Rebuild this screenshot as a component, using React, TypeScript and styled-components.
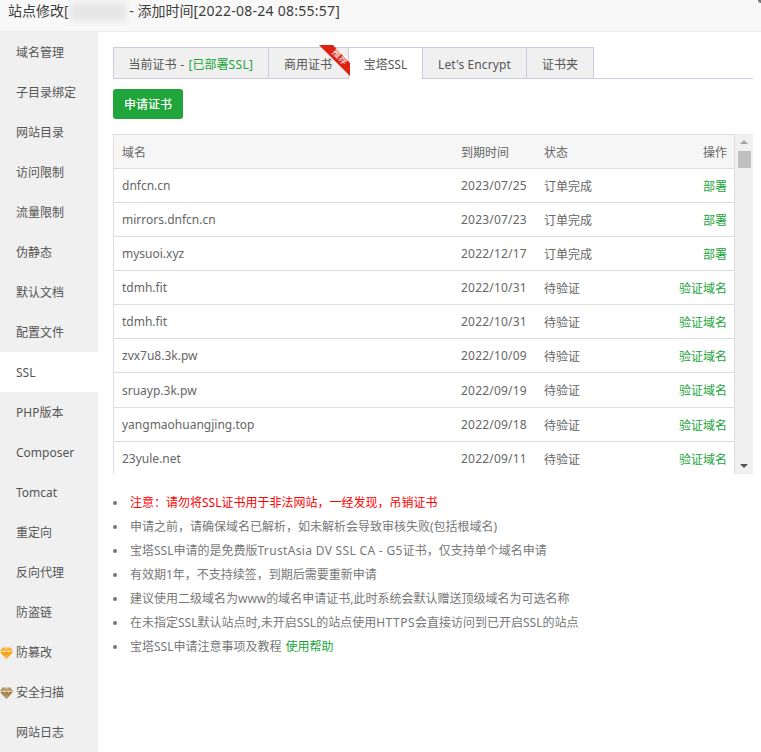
import React from "react";
import styled, { createGlobalStyle } from "styled-components";

const Global = createGlobalStyle`
  html, body { margin: 0; padding: 0; background: #fff; }
  body { font-family: "Noto Sans", "Noto Sans CJK SC", sans-serif; font-size: 12px; color: #666; }
  * { box-sizing: border-box; }
`;

const Page = styled.div`
  width: 761px;
  height: 752px;
  overflow: hidden;
  display: flex;
  flex-direction: column;
  position: relative;
`;
const Header = styled.div`
  height: 32px;
  flex: none;
  background: #f8f8f8;
  border-bottom: 1px solid #eee;
  padding-left: 8px;
  font-size: 14px;
  line-height: 22px;
  color: #3c3c3c;
  display: flex;
  white-space: pre;
`;
const Blur = styled.span`
  display: inline-block;
  width: 56px;
  height: 18px;
  margin: 3px 0 0 1px;
  background: #e6e6e6;
  filter: blur(3px);
`;
const Spaced = styled.span<{ $s: number }>`
  letter-spacing: ${(p) => p.$s}px;
`;
const CloseCorner = styled.span`
  position: absolute;
  top: -3px;
  right: -3px;
  width: 6px;
  height: 6px;
  border-radius: 50%;
  background: #777;
`;
const Body = styled.div`
  flex: 1;
  display: flex;
  min-height: 0;
`;
const Side = styled.div`
  width: 98px;
  flex: none;
  background: #f0f0f0;
`;
const SideItem = styled.div<{ $active?: boolean }>`
  height: 40px;
  line-height: 42px;
  padding-left: 16px;
  position: relative;
  color: #555;
  font-size: 12px;
  background: ${(p) => (p.$active ? "#fff" : "transparent")};
`;
const Gem = styled.svg`
  position: absolute;
  left: 0;
  top: 15px;
  width: 13px;
  height: 12px;
`;
const Main = styled.div`
  flex: 1;
  padding: 15px 8px 0 15px;
  min-width: 0;
`;
const Tabs = styled.div`
  display: flex;
  height: 32px;
  border-bottom: 1px solid #ccccdd;
`;
const Tab = styled.div<{ $w: number; $active?: boolean; $over?: boolean }>`
  width: ${(p) => p.$w}px;
  height: 32px;
  position: relative;
  text-align: center;
  line-height: 34px;
  font-size: 12px;
  color: #555;
  background: ${(p) => (p.$active ? "#fff" : "#f0f0f0")};
  border: 1px solid #ccccdd;
  border-left-width: ${(p) => (p.$active ? 0 : 1)}px;
  border-right-width: ${(p) => (p.$active ? 0 : 1)}px;
  border-bottom-color: ${(p) => (p.$active ? "#fff" : "#ccccdd")};
  margin-left: ${(p) => (p.$active ? 1 : 0)}px;
  margin-right: ${(p) => (p.$active ? 0 : -1)}px;
  padding-right: ${(p) => (p.$over ? 1 : 0)}px;
  z-index: ${(p) => (p.$over ? 2 : 0)};
  white-space: nowrap;
`;
const Deployed = styled.span`
  color: #20a53a;
`;
const Ribbon = styled.svg`
  position: absolute;
  right: -3px;
  top: -4px;
  width: 32px;
  height: 32px;
`;
const RibbonText = styled.span`
  position: absolute;
  right: -4px;
  top: 3px;
  width: 24px;
  text-align: center;
  font-size: 9px;
  line-height: 12px;
  color: #fff;
  transform: rotate(45deg);
`;
const ApplyButton = styled.button`
  display: block;
  width: 70px;
  height: 30px;
  margin-top: 10px;
  border: 0;
  border-radius: 3px;
  background: #20a53a;
  color: #fff;
  font: 500 12px "Noto Sans", "Noto Sans CJK SC", sans-serif;
  padding: 0;
`;
const TableBox = styled.div`
  margin-top: 15px;
  height: 340px;
  display: flex;
  overflow: hidden;
`;
const Grid = styled.div`
  flex: 1;
  min-width: 0;
  border: 1px solid #ddd;
  border-bottom: 0;
`;
const Row = styled.div<{ $head?: boolean; $tall?: boolean }>`
  display: grid;
  grid-template-columns: 339px 83px 1fr auto;
  align-items: center;
  height: ${(p) => (p.$tall ? 35 : 34)}px;
  padding: 0 7px 0 8px;
  border-bottom: 1px solid #ddd;
  background: ${(p) => (p.$head ? "#f6f6f6" : "#fff")};
  font-size: 12px;
  color: #666;
`;
const Action = styled.span`
  color: #20a53a;
  text-align: right;
`;
const OpHead = styled.span`
  text-align: right;
`;
const Track = styled.div`
  width: 18px;
  flex: none;
  background: #f0f0f0;
  position: relative;
`;
const Thumb = styled.div`
  position: absolute;
  left: 3px;
  top: 17px;
  width: 13px;
  height: 17px;
  background: #c0c0c0;
`;
const ArrowUp = styled.div`
  position: absolute;
  left: 5px;
  top: 6px;
  border: 4px solid transparent;
  border-top: 0;
  border-bottom: 4px solid #a3a3a3;
`;
const ArrowDown = styled.div`
  position: absolute;
  left: 5px;
  bottom: 6px;
  border: 4px solid transparent;
  border-bottom: 0;
  border-top: 4px solid #505050;
`;
const Notes = styled.ul`
  list-style: none;
  margin: 17px 0 0;
  padding: 0;
`;
const Note = styled.li<{ $red?: boolean }>`
  height: 24px;
  line-height: 24px;
  padding-left: 17px;
  position: relative;
  font-size: 12px;
  white-space: nowrap;
  color: ${(p) => (p.$red ? "#ff0000" : "#777")};
  &::before {
    content: "";
    position: absolute;
    left: 0;
    top: 10px;
    width: 4px;
    height: 4px;
    border-radius: 50%;
    background: #777;
  }
`;
const HelpLink = styled.a`
  color: #20a53a;
  margin-left: 1px;
`;

const menu = ["域名管理","子目录绑定","网站目录","访问限制","流量限制","伪静态","默认文档","配置文件","SSL","PHP版本","Composer","Tomcat","重定向","反向代理","防盗链","防篡改","安全扫描","网站日志"];

const rows = [
  ["dnfcn.cn","2023/07/25","订单完成","部署"],
  ["mirrors.dnfcn.cn","2023/07/23","订单完成","部署"],
  ["mysuoi.xyz","2022/12/17","订单完成","部署"],
  ["tdmh.fit","2022/10/31","待验证","验证域名"],
  ["tdmh.fit","2022/10/31","待验证","验证域名"],
  ["zvx7u8.3k.pw","2022/10/09","待验证","验证域名"],
  ["sruayp.3k.pw","2022/09/19","待验证","验证域名"],
  ["yangmaohuangjing.top","2022/09/18","待验证","验证域名"],
  ["23yule.net","2022/09/11","待验证","验证域名"],
];

const Diamond = ({ top, bottom }: { top: string; bottom: string }) => (
  <Gem viewBox="0 0 13 12">
    <path d="M2.5 0.5H10.5L13 4H0Z" fill={top} />
    <path d="M0 4.8H13L6.5 12Z" fill={bottom} />
    <path d="M4 4.8L6.5 11M9 4.8L6.5 11M4 4.5L6.5 0.5L9 4.5" stroke="#fff" strokeWidth="0.6" fill="none" opacity="0.6" />
  </Gem>
);

export default function App() {
  return (
    <Page>
      <Global />
      <Header>
        站点修改[<Blur /> - 添加时间<Spaced $s={0.25}>[2022-08-24 08:55:57]</Spaced>
        <CloseCorner />
      </Header>
      <Body>
        <Side>
          {menu.map((m) => (
            <SideItem key={m} $active={m === "SSL"}>
              {m === "防篡改" && <Diamond top="#fbb12c" bottom="#f79a00" />}
              {m === "安全扫描" && <Diamond top="#b89860" bottom="#9a7a3c" />}
              {m}
            </SideItem>
          ))}
        </Side>
        <Main>
          <Tabs>
            <Tab $w={156}>当前证书<Spaced $s={0.6}> - </Spaced><Deployed>[已部署<Spaced $s={0.4}>SSL]</Spaced></Deployed></Tab>
            <Tab $w={81} $over>
              商用证书
              <Ribbon viewBox="0 0 32 32">
                <path d="M0 1H14L31 19V32Z" fill="#dd2211" />
              </Ribbon>
              <RibbonText>推荐</RibbonText>
            </Tab>
            <Tab $w={73} $active>宝塔SSL</Tab>
            <Tab $w={105}><Spaced $s={0.1}>Let's Encrypt</Spaced></Tab>
            <Tab $w={68}>证书夹</Tab>
          </Tabs>
          <ApplyButton>申请证书</ApplyButton>
          <TableBox>
            <Grid>
              <Row $head>
                <span>域名</span><span>到期时间</span><span>状态</span><OpHead>操作</OpHead>
              </Row>
              {rows.map((r, i) => (
                <Row key={i} $tall={i === 6}>
                  <span>{r[0]}</span><Spaced $s={0.2}>{r[1]}</Spaced><span>{r[2]}</span><Action>{r[3]}</Action>
                </Row>
              ))}
            </Grid>
            <Track>
              <ArrowUp />
              <Thumb />
              <ArrowDown />
            </Track>
          </TableBox>
          <Notes>
            <Note $red>注意：请勿将SSL证书用于非法网站，一经发现，吊销证书</Note>
            <Note>申请之前，请确保域名已解析，如未解析会导致审核失败(包括根域名)</Note>
            <Note>宝塔SSL申请的是免费版<Spaced $s={0.33}>TrustAsia DV SSL CA - G5</Spaced>证书，仅支持单个域名申请</Note>
            <Note>有效期1年，不支持续签，到期后需要重新申请</Note>
            <Note>建议使用二级域名为www的域名申请证书,此时系统会默认赠送顶级域名为可选名称</Note>
            <Note>在未指定SSL默认站点时,未开启SSL的站点使用<Spaced $s={0.5}>HTTPS</Spaced>会直接访问到已开启SSL的站点</Note>
            <Note>宝塔SSL申请注意事项及教程 <HelpLink>使用帮助</HelpLink></Note>
          </Notes>
        </Main>
      </Body>
    </Page>
  );
}
